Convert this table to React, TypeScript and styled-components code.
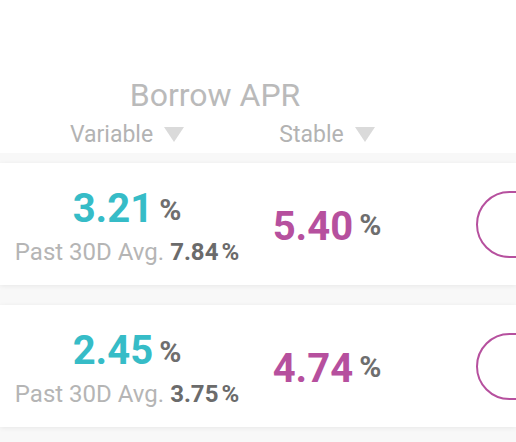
import styled, { createGlobalStyle } from "styled-components";

const GlobalStyle = createGlobalStyle`
  body {
    margin: 0;
    background: #f8f8f8;
    font-family: Roboto, "Liberation Sans", sans-serif;
    overflow: hidden;
  }
`;

const Page = styled.div`
  width: 516px;
  height: 442px;
  overflow: hidden;
`;

const Header = styled.header`
  background: #fff;
  height: 153px;
  box-sizing: border-box;
  padding: 79px 0 0 27px;
`;

const Title = styled.h2`
  margin: 0 0 12px;
  width: 376px;
  text-align: center;
  font-size: 32px;
  line-height: 32px;
  font-weight: 400;
  color: #bababa;
`;

const Columns = styled.div`
  display: grid;
  grid-template-columns: 200px 200px 1fr;
`;

const Label = styled.div`
  display: flex;
  justify-content: center;
  align-items: center;
  gap: 11px;
  font-size: 23px;
  line-height: 23px;
  color: #b3b3b3;
`;

const List = styled.div`
  display: flex;
  flex-direction: column;
  gap: 20px;
  padding: 10px 0;
`;

const Card = styled.div`
  display: grid;
  grid-template-columns: 200px 200px 1fr;
  align-items: center;
  height: 122px;
  box-sizing: border-box;
  padding: 6px 0 0 27px;
  background: #fff;
  box-shadow: 0 1px 5px rgba(0, 0, 0, 0.07);
`;

const RateCell = styled.div`
  display: flex;
  flex-direction: column;
  align-items: center;
  white-space: nowrap;
`;

const RateLine = styled.div`
  display: flex;
  align-items: baseline;
`;

const Rate = styled.span<{ $color: string }>`
  font-size: 40px;
  line-height: 42px;
  font-weight: 700;
  color: ${(p) => p.$color};
`;

const Percent = styled.span<{ $lift: number }>`
  margin-left: 6px;
  font-size: 30px;
  font-weight: 700;
  color: #6e6e6e;
  position: relative;
  top: -${(p) => p.$lift}px;
`;

const Average = styled.div`
  margin-top: 8px;
  font-size: 24px;
  line-height: 28px;
  color: #b5b5b5;

  strong {
    margin-left: 6px;
    color: #6b6b6b;
    font-weight: 700;
  }

  strong span {
    margin-left: 3px;
  }
`;

const ActionCell = styled.div`
  padding-left: 49px;
  margin-top: -4px;
`;

const PillButton = styled.button`
  width: 200px;
  height: 67px;
  border: 2px solid #b6509e;
  border-radius: 34px;
  background: transparent;
  padding: 0;
`;

function Caret() {
  return (
    <svg width="20" height="15" viewBox="0 0 20 15">
      <polygon points="0,0 20,0 10,15" fill="#dadada" />
    </svg>
  );
}

const rows = [
  { variable: "3.21", avg: "7.84", stable: "5.40" },
  { variable: "2.45", avg: "3.75", stable: "4.74" },
];

export default function App() {
  return (
    <Page>
      <GlobalStyle />
      <Header>
        <Title>Borrow APR</Title>
        <Columns>
          <Label>
            Variable <Caret />
          </Label>
          <Label>
            Stable <Caret />
          </Label>
        </Columns>
      </Header>
      <List>
        {rows.map((r) => (
          <Card key={r.variable}>
            <RateCell>
              <RateLine>
                <Rate $color="#36bcc7">{r.variable}</Rate>
                <Percent $lift={2}>%</Percent>
              </RateLine>
              <Average>
                Past 30D Avg.
                <strong>
                  {r.avg}
                  <span>%</span>
                </strong>
              </Average>
            </RateCell>
            <RateCell>
              <RateLine>
                <Rate $color="#b6509e">{r.stable}</Rate>
                <Percent $lift={5}>%</Percent>
              </RateLine>
            </RateCell>
            <ActionCell>
              <PillButton aria-label="Borrow" />
            </ActionCell>
          </Card>
        ))}
      </List>
    </Page>
  );
}
